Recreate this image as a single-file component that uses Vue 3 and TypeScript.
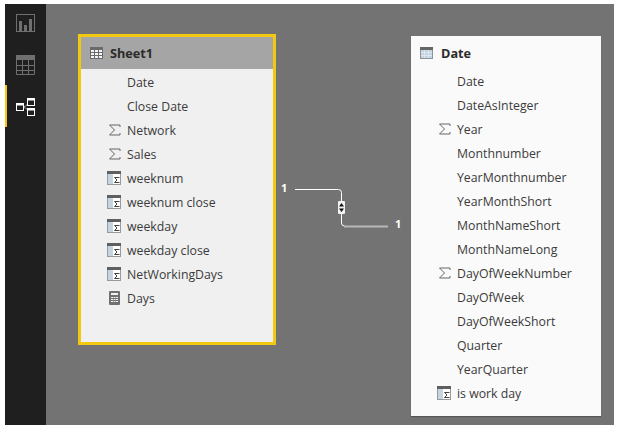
<script setup lang="ts">
type Kind = 'none' | 'sum' | 'calc' | 'measure'
interface Field { name: string; kind: Kind }
interface DiagramTable { id: string; name: string; selected: boolean; fields: Field[] }

const tables: DiagramTable[] = [
  {
    id: 'sheet',
    name: 'Sheet1',
    selected: true,
    fields: [
      { name: 'Date', kind: 'none' },
      { name: 'Close Date', kind: 'none' },
      { name: 'Network', kind: 'sum' },
      { name: 'Sales', kind: 'sum' },
      { name: 'weeknum', kind: 'calc' },
      { name: 'weeknum close', kind: 'calc' },
      { name: 'weekday', kind: 'calc' },
      { name: 'weekday close', kind: 'calc' },
      { name: 'NetWorkingDays', kind: 'calc' },
      { name: 'Days', kind: 'measure' },
    ],
  },
  {
    id: 'date',
    name: 'Date',
    selected: false,
    fields: [
      { name: 'Date', kind: 'none' },
      { name: 'DateAsInteger', kind: 'none' },
      { name: 'Year', kind: 'sum' },
      { name: 'Monthnumber', kind: 'none' },
      { name: 'YearMonthnumber', kind: 'none' },
      { name: 'YearMonthShort', kind: 'none' },
      { name: 'MonthNameShort', kind: 'none' },
      { name: 'MonthNameLong', kind: 'none' },
      { name: 'DayOfWeekNumber', kind: 'sum' },
      { name: 'DayOfWeek', kind: 'none' },
      { name: 'DayOfWeekShort', kind: 'none' },
      { name: 'Quarter', kind: 'none' },
      { name: 'YearQuarter', kind: 'none' },
      { name: 'is work day', kind: 'calc' },
    ],
  },
]
</script>

<template>
  <div class="app">
    <nav class="rail">
      <div class="rail-item">
        <svg width="20" height="20" viewBox="0 0 20 20" fill="none">
          <rect x="1.5" y="1.5" width="18" height="17" stroke="#6f6f6f" />
          <rect x="4" y="8" width="3" height="10" fill="#6f6f6f" />
          <rect x="9" y="12" width="3" height="6" fill="#6f6f6f" />
          <rect x="14" y="6" width="3" height="12" fill="#6f6f6f" />
        </svg>
      </div>
      <div class="rail-item second">
        <svg width="21" height="21" viewBox="0 0 21 21" fill="none">
          <rect x="1" y="1" width="19" height="5" fill="#6f6f6f" />
          <path d="M1.500 1.500h18v19h-18zM1.500 11.500h18M1.500 16.500h18M7.500 6v14M13.500 6v14" stroke="#6f6f6f" />
        </svg>
      </div>
      <div class="rail-item active">
        <svg width="20" height="20" viewBox="0 0 20 20" fill="none">
          <path d="M9 11l4-3M9 11l4 3" stroke="#9a9a9a" />
          <rect x="1.500" y="7.500" width="7" height="7" fill="#1f1f1f" stroke="#fff" />
          <rect x="1.500" y="7.500" width="7" height="2" fill="#fff" />
          <rect x="12.500" y="2.500" width="7" height="7" fill="#1f1f1f" stroke="#fff" />
          <rect x="12.500" y="2.500" width="7" height="2" fill="#fff" />
          <rect x="12.500" y="12.500" width="7" height="7" fill="#1f1f1f" stroke="#fff" />
          <rect x="12.500" y="12.500" width="7" height="2" fill="#fff" />
        </svg>
      </div>
    </nav>

    <main class="canvas">
      <svg class="link" width="140" height="60" viewBox="0 0 140 60" fill="none">
        <path d="M27 15.500h43.500q3 0 3 3v20" stroke="#fff" />
        <path d="M73.500 38v11q0 3 3 3" stroke="#fff" />
        <path d="M76 52.500h44" stroke="#b8b8b8" stroke-width="2" />
        <rect x="70" y="27" width="7" height="13" rx="1" fill="#f2f2f2" />
        <path d="M73.500 29l2.500 3.500h-5zM73.500 38l-2.500-3.500h5z" fill="#111" />
      </svg>
      <span class="card-num left">1</span>
      <span class="card-num right">1</span>

      <section v-for="t in tables" :key="t.id" class="table" :class="[t.id, { selected: t.selected }]">
        <header class="table-head">
          <svg v-if="t.selected" width="13" height="12" viewBox="0 0 13 12">
            <rect width="13" height="12" fill="#6a6a6a" />
            <path d="M1 3h11v8H1z" fill="#f4f4f4" />
            <path d="M4.500 3v8M8.500 3v8M1 5.500h11M1 8.500h11" stroke="#6a6a6a" />
          </svg>
          <svg v-else width="13" height="12" viewBox="0 0 13 12">
            <rect width="13" height="12" fill="#8d959c" />
            <rect width="13" height="3" fill="#666" />
            <path d="M1 3h11v8H1z" fill="#c3d3e2" />
            <path d="M4.500 3v8M8.500 3v8M1 5.500h11M1 8.500h11" stroke="#dfe7ee" />
          </svg>
          <span class="table-name">{{ t.name }}</span>
        </header>
        <ul class="fields">
          <li v-for="f in t.fields" :key="f.name" class="field">
            <span class="field-icon">
              <svg v-if="f.kind === 'sum'" width="13" height="12" viewBox="0 0 13 12" fill="none">
                <path d="M12 3V1H1.500L6.500 6l-5 5H12V9" stroke="#666" />
              </svg>
              <svg v-else-if="f.kind === 'calc'" width="14" height="14" viewBox="0 0 14 14">
                <rect width="14" height="14" fill="#9a9a9a" />
                <rect width="14" height="3" fill="#5f5f5f" />
                <rect x="1" y="3" width="12" height="10" fill="#fff" />
                <rect x="1" y="3" width="5" height="10" fill="#c6d4e0" />
                <path d="M12.500 6.500h-5l2.500 2.500-2.500 2.500h5" fill="none" stroke="#444" />
              </svg>
              <svg v-else-if="f.kind === 'measure'" width="11" height="14" viewBox="0 0 11 14">
                <rect width="11" height="14" rx="1" fill="#707070" />
                <rect x="2" y="2" width="7" height="2" fill="#f0f0f0" />
                <path d="M2 6h2v1H2zM4.500 6h2v1h-2zM7 6h2v1H7zM2 8h2v1H2zM4.500 8h2v1h-2zM7 8h2v1H7zM2 10h2v1H2zM4.500 10h2v1h-2zM7 10h2v1H7z" fill="#f0f0f0" />
              </svg>
            </span>
            <span class="field-name">{{ f.name }}</span>
          </li>
        </ul>
      </section>
    </main>
  </div>
</template>

<style>
html, body {
  margin: 0;
  background: #fff;
}
</style>

<style scoped>
.app {
  display: flex;
  width: 609px;
  height: 421px;
  margin: 4px 0 0 5px;
  font-family: "Open Sans", "Noto Sans", sans-serif;
  overflow: hidden;
}

.rail {
  width: 41px;
  flex: none;
  background: #1f1f1f;
  display: flex;
  flex-direction: column;
}

.rail-item {
  height: 38px;
  display: flex;
  align-items: center;
  padding-left: 10px;
  box-sizing: border-box;
}

.rail-item.second {
  height: 43px;
  padding-top: 2px;
}

.rail-item.active {
  box-shadow: inset 2px 0 0 #f2c811;
  height: 42px;
}

.canvas {
  position: relative;
  flex: 1;
  background: #737373;
}

.table {
  position: absolute;
  box-sizing: border-box;
  color: #3b3b3b;
}

.table.sheet {
  left: 32px;
  top: 30px;
  width: 198px;
  height: 311px;
  background: #f0f0f0;
  border: 3px solid #f2c811;
}

.table.date {
  left: 365px;
  top: 32px;
  width: 190px;
  height: 380px;
  background: #fafafa;
  box-shadow: 0 1px 1px rgba(0, 0, 0, 0.25);
}

.table-head {
  display: flex;
  align-items: center;
  gap: 7px;
  height: 32px;
  padding-left: 9px;
}

.selected .table-head {
  background: #a5a5a5;
}

.table.date .table-head {
  height: 33px;
  gap: 8px;
}

.table-name {
  font-size: 12.7px;
  font-weight: 700;
  color: #2b2b2b;
}

.fields {
  list-style: none;
  margin: 0;
  padding: 0;
}

.sheet .fields {
  padding-top: 1px;
}

.field {
  display: flex;
  align-items: center;
  height: 24px;
  padding-left: 23px;
}

.field-icon {
  width: 20px;
  flex: none;
  margin-right: 3px;
  display: flex;
  justify-content: center;
}

.field-name {
  font-size: 12.3px;
  white-space: nowrap;
}

.link {
  position: absolute;
  left: 222px;
  top: 170px;
}

.card-num {
  position: absolute;
  font-size: 11px;
  font-weight: 700;
  color: #fff;
}

.card-num.left {
  left: 235px;
  top: 176px;
}

.card-num.right {
  left: 349px;
  top: 212px;
}
</style>
